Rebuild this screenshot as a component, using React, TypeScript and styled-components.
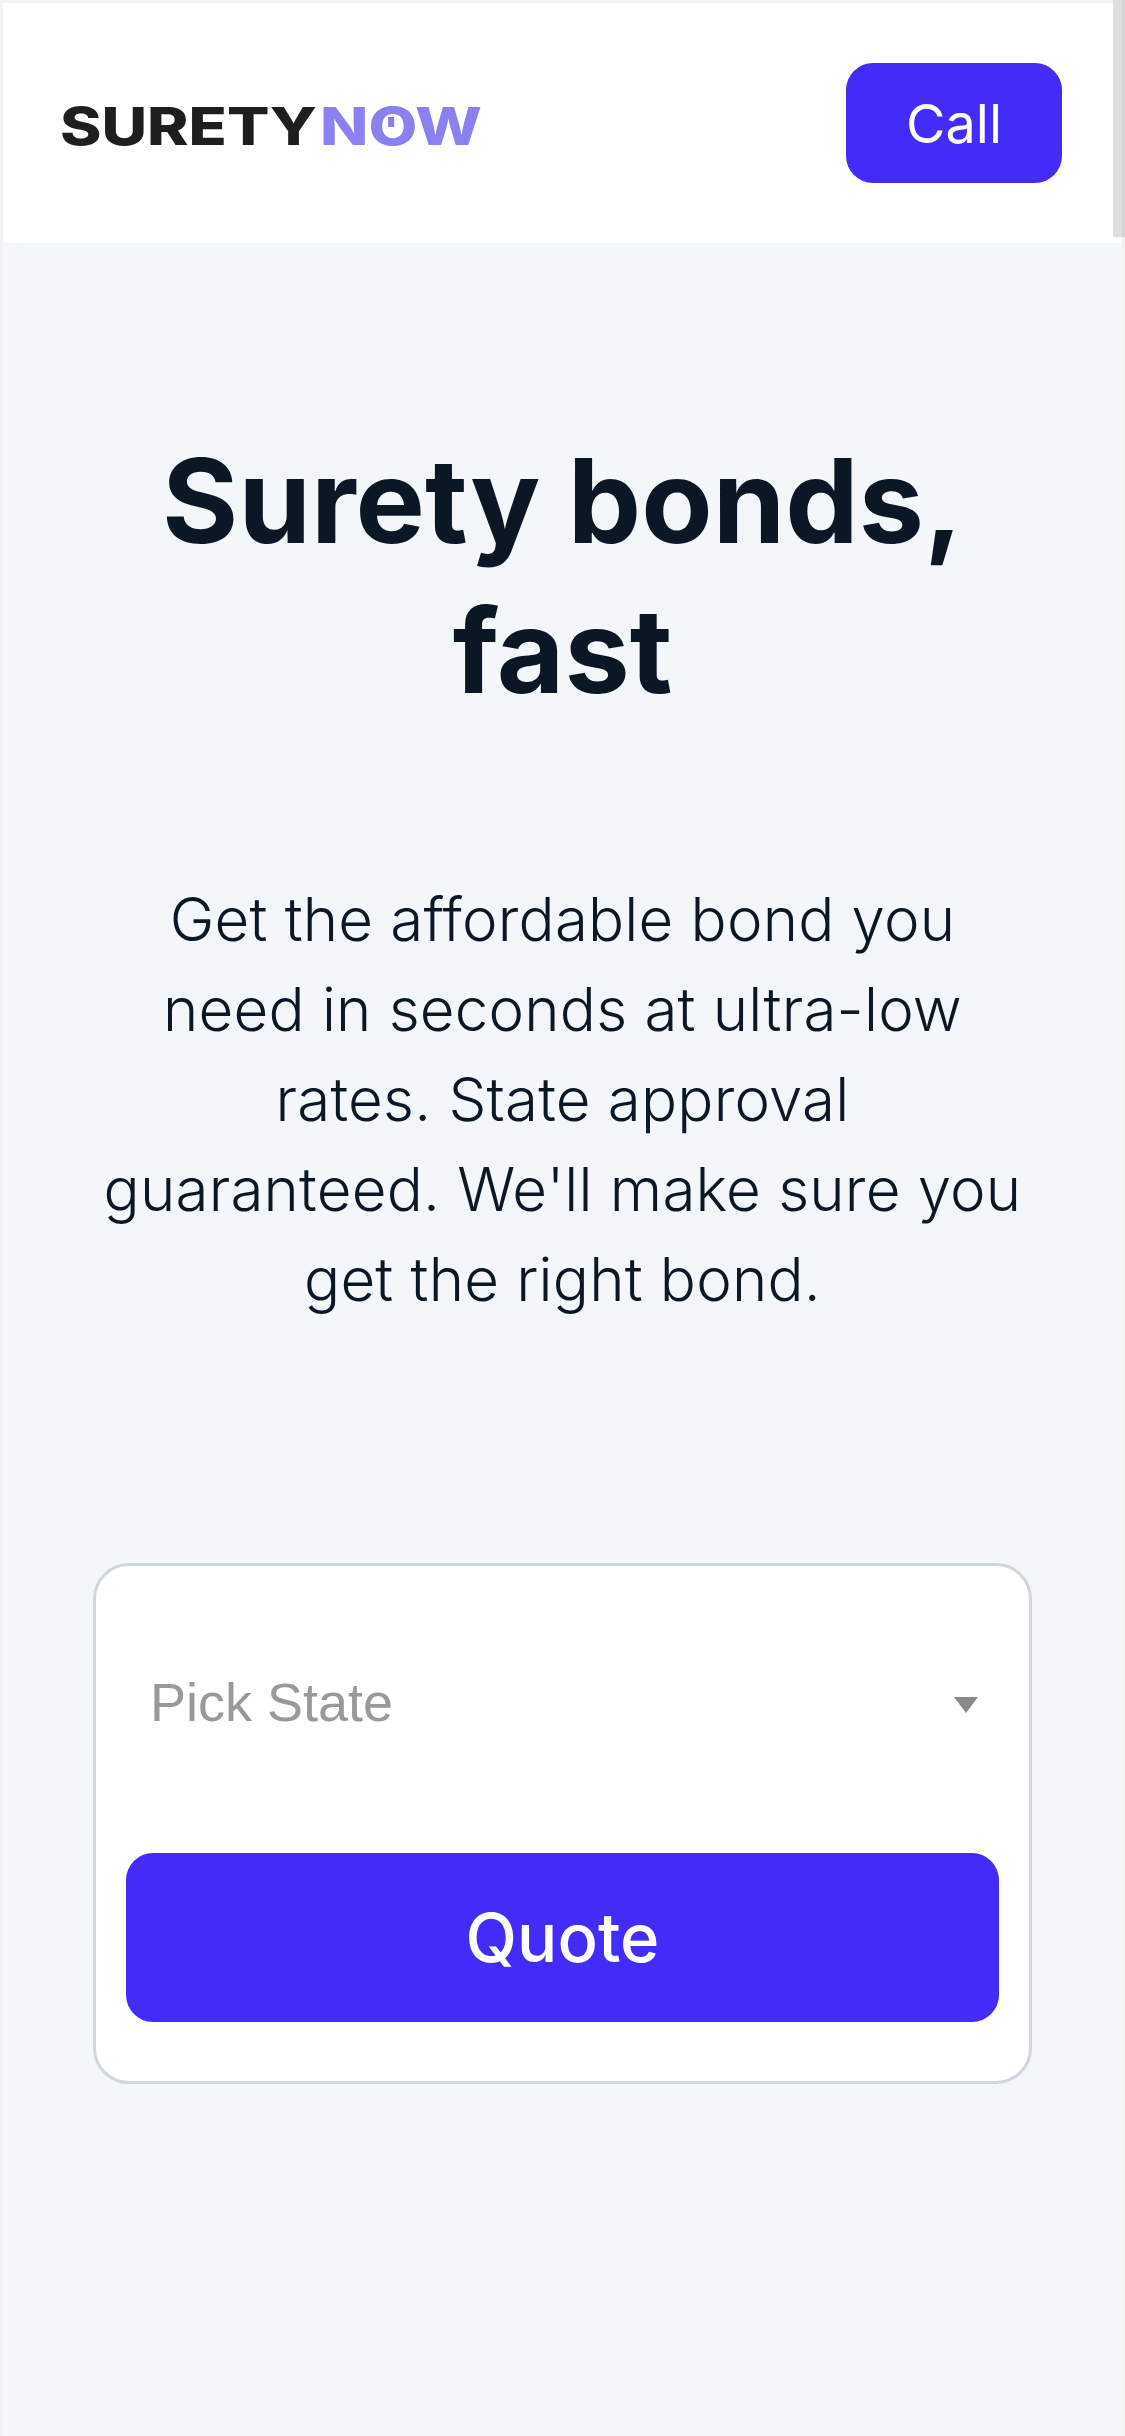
import React from "react";
import styled, { createGlobalStyle } from "styled-components";

const GlobalStyle = createGlobalStyle`
  html, body {
    margin: 0;
    padding: 0;
    background-color: #f2f2f2;
  }
  * {
    box-sizing: border-box;
  }
`;

const Page = styled.div`
  position: relative;
  width: 1125px;
  height: 2436px;
  padding: 3px 3px 0 3px;
  overflow: hidden;
  font-family: "Inter", "Liberation Sans", sans-serif;
`;

const ScrollThumb = styled.div`
  position: absolute;
  top: 0;
  right: 0;
  width: 12px;
  height: 237px;
  background-color: #dedede;
  border-right: 3px solid #d6d6d6;
`;

const Header = styled.header`
  height: 240px;
  background-color: #fff;
  display: flex;
  align-items: center;
  justify-content: space-between;
  padding: 0 60px 0 57px;
`;

const Logo = styled.div`
  display: flex;
  align-items: center;
  gap: 9px;
  margin-top: 8px;
  font-size: 52px;
  line-height: 1;
  font-weight: 800;
`;

const LogoWord = styled.span<{ $tone: string; $width: number; $stretch: number }>`
  position: relative;
  display: inline-block;
  color: ${(p) => p.$tone};
  width: ${(p) => p.$width}px;
  transform-origin: left center;
  transform: scaleX(${(p) => p.$stretch});
  white-space: nowrap;
`;

const LogoDot = styled.i`
  position: absolute;
  left: 56px;
  top: 16px;
  width: 5px;
  height: 10px;
  background-color: #8b80ef;
`;

const CallButton = styled.button`
  width: 216px;
  height: 120px;
  border: none;
  border-radius: 27px;
  background-color: #432cf7;
  color: #fff;
  font-family: "Inter", sans-serif;
  font-size: 54px;
  font-weight: 400;
`;

const Main = styled.main`
  height: 2193px;
  background-color: #f3f7fa;
  padding: 0 90px;
  display: flex;
  flex-direction: column;
  align-items: center;
`;

const Title = styled.h1`
  margin: 183px 0 0;
  font-size: 116.5px;
  line-height: 150px;
  font-weight: 700;
  color: #0c1726;
  text-align: center;
`;

const Lead = styled.p`
  margin: 148px -40px 0;
  font-size: 60px;
  line-height: 90px;
  font-weight: 300;
  letter-spacing: 0.2px;
  color: #0c1726;
  text-align: center;
`;

const Card = styled.form`
  margin-top: 239px;
  width: 939px;
  height: 521px;
  background-color: #fff;
  border: 3px solid #cfd6de;
  border-radius: 36px;
  padding: 0 30px;
  display: flex;
  flex-direction: column;
`;

const StateSelect = styled.div`
  height: 287px;
  display: flex;
  align-items: center;
  justify-content: space-between;
  padding: 0 21px 15px 24px;
  font-family: "Liberation Sans", Arial, sans-serif;
  font-size: 54px;
  color: #999;
`;

const Caret = styled.span`
  width: 0;
  height: 0;
  margin-top: 6px;
  border-left: 12px solid transparent;
  border-right: 12px solid transparent;
  border-top: 16px solid #8a8a8a;
`;

const QuoteButton = styled.button`
  height: 169px;
  border: none;
  border-radius: 27px;
  background-color: #432cf7;
  color: #fff;
  font-family: "Inter", sans-serif;
  font-size: 67px;
  font-weight: 500;
`;

const App: React.FC = () => {
  return (
    <>
      <GlobalStyle />
      <Page>
        <ScrollThumb />
        <Header>
          <Logo>
            <LogoWord $tone="#1e1e1e" $width={251} $stretch={1.207}>SURETY</LogoWord>
            <LogoWord $tone="#8b80ef" $width={159} $stretch={1.216}>
              NOW
              <LogoDot />
            </LogoWord>
          </Logo>
          <CallButton type="button">Call</CallButton>
        </Header>
        <Main>
          <Title>
            Surety bonds,
            <br />
            fast
          </Title>
          <Lead>
            Get the affordable bond you
            <br />
            need in seconds at ultra-low
            <br />
            rates. State approval
            <br />
            guaranteed. We'll make sure you
            <br />
            get the right bond.
          </Lead>
          <Card>
            <StateSelect>
              Pick State
              <Caret />
            </StateSelect>
            <QuoteButton type="button">Quote</QuoteButton>
          </Card>
        </Main>
      </Page>
    </>
  );
};

export default App;
